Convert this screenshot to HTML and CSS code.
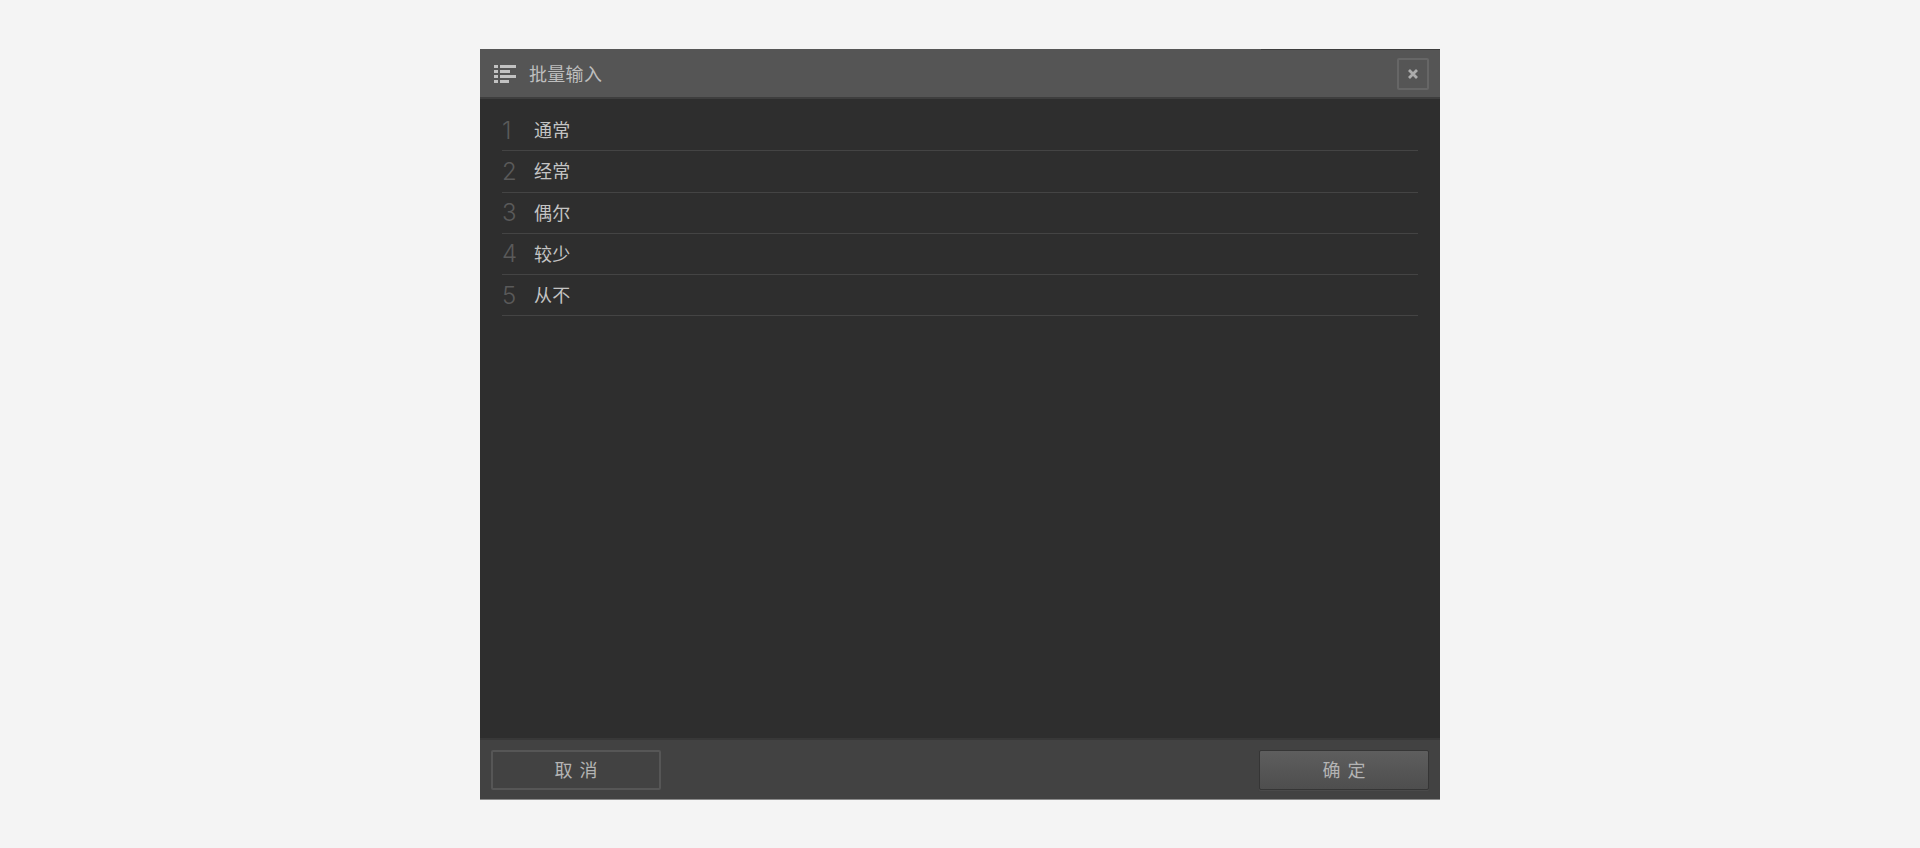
FILE: index.html
```html
<!DOCTYPE html>
<html lang="zh-CN">
  <head>
    <meta charset="UTF-8" />
    <title>批量输入</title>
    <link rel="stylesheet" href="styles.css">
  </head>
  <body>
    <div class="dialog">
      <div class="head">
        <svg class="head-icon" width="22" height="19" viewBox="0 0 22 19" fill="#c2c2c2">
          <rect x="0" y="0" width="4" height="3" />
          <rect x="6" y="0" width="16" height="3" />
          <rect x="0" y="5" width="4" height="3" />
          <rect x="6" y="5" width="10" height="3" />
          <rect x="0" y="10" width="4" height="3" />
          <rect x="6" y="10" width="16" height="3" />
          <rect x="0" y="15" width="4" height="3" />
          <rect x="6" y="15" width="9" height="3" />
        </svg>
        <span class="title">批量输入</span>
        <button class="close">
          <svg width="10" height="10" viewBox="0 0 10 10">
            <path d="M1 1 L9 9 M9 1 L1 9" stroke="#acacac" stroke-width="2.8" />
          </svg>
        </button>
      </div>
      <ol class="list">
        <li><span class="num">1</span><span class="txt">通常</span></li>
        <li><span class="num">2</span><span class="txt">经常</span></li>
        <li><span class="num">3</span><span class="txt">偶尔</span></li>
        <li><span class="num">4</span><span class="txt">较少</span></li>
        <li><span class="num">5</span><span class="txt">从不</span></li>
      </ol>
      <div class="foot">
        <button class="btn cancel">取 消</button>
        <button class="btn ok">确 定</button>
      </div>
    </div>
  </body>
</html>
```

FILE: styles.css
```css
* {
  margin: 0;
  padding: 0;
  box-sizing: border-box;
}
body {
  height: 848px;
  padding-top: 49px;
  overflow: hidden;
  background-color: #f4f4f4;
  font-family: "Liberation Sans", "Noto Sans CJK SC", sans-serif;
}
.dialog {
  display: flex;
  flex-direction: column;
  width: 960px;
  height: 751px;
  margin: 0 auto;
  background-color: #2e2e2e;
}
.head {
  display: flex;
  align-items: center;
  height: 50px;
  padding: 2px 11px 0 14px;
  background: linear-gradient(#3c3c3c, #3c3c3c) right top / 179px 1px no-repeat, #555;
  border-bottom: 2px solid #3e3e3e;
}
.head-icon {
  margin-right: 13px;
}
.title {
  flex: 1;
  padding-bottom: 3px;
  font-size: 18px;
  letter-spacing: 0.3px;
  color: #bebebe;
}
.close {
  display: flex;
  align-items: center;
  justify-content: center;
  width: 32px;
  height: 32px;
  background: none;
  border: 2px solid #666;
  border-radius: 2px;
}
.list {
  flex: 1;
  padding: 11px 22px 0;
  list-style: none;
}
.list li {
  display: flex;
  align-items: center;
  height: 41.25px;
  border-bottom: 1px solid #444;
}
.num {
  width: 32px;
  font-family: "Inter", "Liberation Sans", sans-serif;
  font-weight: 300;
  font-size: 24px;
  color: #5a5a5a;
}
.txt {
  padding-bottom: 2px;
  font-size: 18px;
  letter-spacing: 0.2px;
  color: #c4c4c4;
}
.foot {
  display: flex;
  align-items: center;
  justify-content: space-between;
  height: 62px;
  padding: 0 11px;
  background-color: #424242;
  border-top: 2px solid #383838;
  border-bottom: 1px solid #8a8a8a;
}
.btn {
  width: 170px;
  height: 40px;
  padding-bottom: 2px;
  font-family: inherit;
  font-size: 18px;
  word-spacing: 2px;
  color: #b4b4b4;
  border-radius: 2px;
}
.cancel {
  background: none;
  border: 2px solid #565656;
}
.ok {
  background: linear-gradient(#5e5e5e, #4e4e4e);
  border: 1px solid #353535;
  box-shadow: 0 1px 1px #4c4c4c;
}
```
